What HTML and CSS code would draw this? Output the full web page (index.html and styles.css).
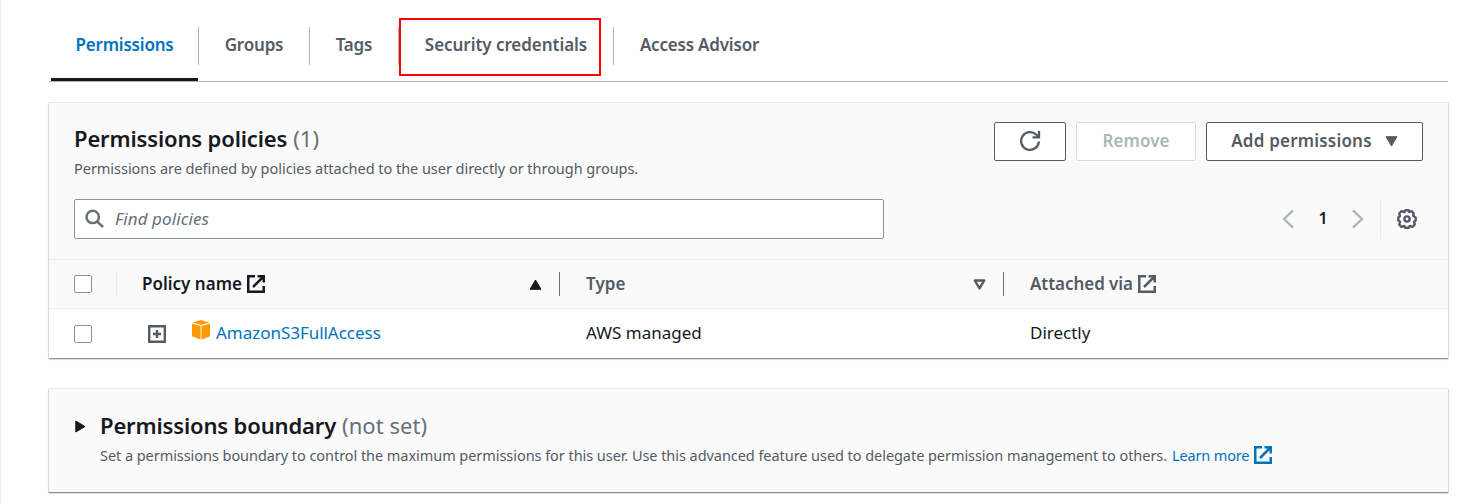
FILE: index.html
```html
<!DOCTYPE html>
<html lang="en">
<head>
<meta charset="utf-8">
<title>Permissions</title>
<link rel="stylesheet" href="styles.css">
</head>
<body>
<svg class="defs" aria-hidden="true">
  <symbol id="external" viewBox="0 0 18 18"><path d="M8 1.25H1.25v15.500h15.500V11M10.500 1.250h6.250V7.500M16.500 1.500 6 12" fill="none" stroke="currentColor" stroke-width="2.500"/></symbol>
</svg>
<main class="page">
  <nav class="tabs">
    <a class="tab tab-permissions active"><span>Permissions</span></a>
    <a class="tab tab-groups"><span>Groups</span></a>
    <a class="tab tab-tags"><span>Tags</span></a>
    <a class="tab tab-credentials"><span>Security credentials</span><i class="highlight"></i></a>
    <a class="tab tab-advisor"><span>Access Advisor</span></a>
  </nav>

  <section class="card policies">
    <header class="card-header">
      <div class="heading">
        <div>
          <h2><span class="title">Permissions policies</span><span class="count">(1)</span></h2>
          <p class="description">Permissions are defined by policies attached to the user directly or through groups.</p>
        </div>
        <div class="actions">
          <button class="button refresh" aria-label="Refresh"><svg width="22" height="22" viewBox="0 0 22 22" fill="none" stroke="currentColor" stroke-width="2.300"><path d="M19.900 11.500a8.900 8.900 0 1 1-2.500-6.700L19.500 7M20 1v6.400h-6.500"/></svg></button>
          <button class="button remove" disabled><span>Remove</span></button>
          <button class="button add"><span>Add permissions</span><svg width="13" height="11" viewBox="0 0 13 11"><path d="M1 .7h11L6.500 10z" fill="currentColor" stroke="currentColor" stroke-linejoin="round"/></svg></button>
        </div>
      </div>
      <div class="tools">
        <div class="search">
          <svg width="20" height="20" viewBox="0 0 20 20" fill="none" stroke="currentColor" stroke-width="2.500"><circle cx="7.700" cy="7.900" r="6.200"/><path d="m12 12.300 6 5.700"/></svg>
          <span>Find policies</span>
        </div>
        <div class="pagination">
          <svg width="12" height="20" viewBox="0 0 12 20" fill="none" stroke="currentColor" stroke-width="2.300"><path d="M11 1.300 2 10l9 8.700"/></svg>
          <b>1</b>
          <svg width="12" height="20" viewBox="0 0 12 20" fill="none" stroke="currentColor" stroke-width="2.300"><path d="m1 1.300 9 8.700-9 8.700"/></svg>
          <div class="settings">
            <svg width="20" height="20" viewBox="0 0 20 20" fill="none" stroke="currentColor" stroke-width="2.400" stroke-linejoin="round"><path d="m8.400 1.300h3.200l.7 1.600 2.200-.7 2.300 2.300-.7 2.200 2.600 1.700v3.200L17.100 12.700l.7 2.800-2.300 2.300-2.700-.8-1.200 1.700H8.400L7.200 17l-2.700.8-2.300-2.300.8-2.700-1.700-1.200V8.400L3 7.200l-.8-2.700 2.300-2.300 2.700.8z"/><circle cx="10" cy="10" r="2.600"/></svg>
          </div>
        </div>
      </div>
    </header>
    <div class="row row-head">
      <div class="cell check"><i class="checkbox"></i></div>
      <div class="cell name"><span class="t-policy">Policy name</span><svg class="ext" width="18" height="18"><use href="#external"/></svg><svg class="sort" width="13" height="11" viewBox="0 0 13 11"><path d="M1 10.300h11L6.500 1z" fill="currentColor" stroke="currentColor" stroke-linejoin="round"/></svg></div>
      <div class="cell type"><span class="t-type">Type</span><svg class="sort" width="13" height="11" viewBox="0 0 13 11"><path d="M1.800 1.500h9.400L6.500 9.300z" fill="none" stroke="currentColor" stroke-width="2.400" stroke-linejoin="round"/></svg></div>
      <div class="cell via"><span class="t-via">Attached via</span><svg class="ext" width="18" height="18"><use href="#external"/></svg></div>
    </div>
    <div class="row row-body">
      <div class="cell check"><i class="checkbox"></i></div>
      <div class="cell name">
        <svg class="expand" width="18" height="18" viewBox="0 0 18 18" fill="none" stroke="currentColor" stroke-width="2.400"><path d="M1.200 1.200h15.600v15.600H1.200zM9 5v8M5 9h8"/></svg>
        <svg class="cube" width="18" height="20" viewBox="0 0 18 20" fill="#ff9900"><path d="m9 0 8.300 2.400L9 5 .7 2.400zM0 3.500l8.500 2.600V19.500L0 16.200zM18 3.500 9.500 6.100v13.400l8.500-3.300z"/></svg>
        <a class="t-link">AmazonS3FullAccess</a>
      </div>
      <div class="cell type"><span class="t-aws">AWS managed</span></div>
      <div class="cell via"><span class="t-direct">Directly</span></div>
    </div>
  </section>

  <section class="card boundary">
    <svg class="caret" width="11" height="13" viewBox="0 0 11 13"><path d="M.8 1v11L10 6.500z" fill="currentColor" stroke="currentColor" stroke-linejoin="round"/></svg>
    <div>
      <h2><span class="title">Permissions boundary</span><span class="count">(not set)</span></h2>
      <p class="description"><span class="t-set">Set a permissions boundary to control the maximum permissions for this user. Use this advanced feature used to delegate permission management to others.</span><a class="learn">Learn more</a><svg class="learn-icon" width="18" height="18"><use href="#external"/></svg></p>
    </div>
  </section>
</main>
</body>
</html>
```
FILE: styles.css
```css
* { box-sizing: border-box; }
body { margin: 0; background: #fff; font-family: "Noto Sans", "Open Sans", sans-serif; font-size: 17px; color: #16191f; }
.defs { position: absolute; width: 0; height: 0; }
.page { height: 504px; padding: 0 35px 0 48px; border-left: 1px solid #f0f0f0; overflow: hidden; }
span, a, b { white-space: nowrap; }
svg { display: block; flex: none; }

.tabs { display: flex; height: 82px; padding: 27px 0 0 2px; border-bottom: 1px solid #aab7b8; }
.tab { position: relative; display: flex; justify-content: center; height: 38px; line-height: 36px; border-right: 1px solid #aab7b8; color: #545b64; font-weight: 600; letter-spacing: -.2px; }
.tab.active { color: #0073bb; }
.tab.active::after { content: ""; position: absolute; left: 0; right: 0; top: 51px; height: 3px; background: #16191f; }
.tab-permissions { width: 148px; }
.tab-groups { width: 111px; }
.tab-tags { width: 89px; }
.tab-credentials { width: 215px; letter-spacing: -.05px; }
.tab-advisor { width: 171px; border-right: 0; }
.highlight { position: absolute; left: 0; top: -9px; width: 202px; height: 58px; border: 2px solid #f00; }

.card { width: 1401px; margin-left: -1px; border: 1px solid #d5dbdb; border-top-color: #eaeded; border-bottom-color: #879596; border-radius: 2px; box-shadow: 0 1px 1px #d5dbdb; }
.policies { margin-top: 20px; height: 257px; }
.card-header { height: 156px; padding: 18px 25px 0; background: #fafafa; }
.heading { display: flex; justify-content: space-between; height: 78px; }
h2 { display: flex; gap: 6px; margin: 0; font-size: 22px; line-height: 34px; font-weight: 600; }
.title { letter-spacing: -.15px; }
.count { color: #687078; font-weight: 400; letter-spacing: .05px; }
.description { margin: 0; font-size: 14.500px; line-height: 26px; color: #545b64; letter-spacing: -.035px; }
.actions { display: flex; gap: 10px; padding-top: 1px; }
.button { display: flex; align-items: center; justify-content: center; height: 39px; padding: 0 0 1px; border: 1px solid #545b64; border-radius: 2px; background: #fff; color: #545b64; font: 600 17px "Noto Sans", sans-serif; }
.button span { margin-top: -1px; }
.refresh { width: 72px; padding: 0; }
.refresh svg { margin-top: -1px; }
.remove { width: 120px; border-color: #d5dbdb; color: #aab7b8; letter-spacing: .1px; }
.add { width: 217px; gap: 13px; letter-spacing: .2px; }
.tools { display: flex; justify-content: space-between; }
.search { display: flex; align-items: center; gap: 10px; width: 810px; height: 40px; padding: 0 10px; border: 1px solid #879596; border-radius: 2px; background: #fff; color: #687078; font-style: italic; }
.search span { margin-top: -2px; letter-spacing: .1px; }
.pagination { display: flex; align-items: center; height: 40px; color: #aab7b8; }
.pagination b { width: 58px; margin-top: -2px; text-align: center; color: #16191f; font-size: 16px; font-weight: 600; }
.settings { display: flex; align-items: center; justify-content: flex-end; width: 43px; height: 40px; margin-left: 16px; padding-right: 6px; border-left: 1px solid #eaeded; color: #545b64; }

.row { display: grid; grid-template-columns: 68px 443px 444px 1fr; }
.cell { display: flex; align-items: center; }
.cell span, .cell a { margin-top: -2px; }
.row-head { height: 50px; padding: 12px 0; border-top: 1px solid #eaeded; border-bottom: 1px solid #eaeded; background: #fafafa; color: #545b64; font-weight: 600; }
.row-body { height: 49px; background: #fff; }
.check { padding-left: 25px; }
.checkbox { width: 18px; height: 18px; border: 1px solid #879596; border-radius: 2px; background: #fff; }
.row-head .check { border-right: 1px solid #eaeded; }
.name { padding-left: 25px; }
.row-head .name { border-right: 1px solid #687078; color: #16191f; }
.row-head .type { border-right: 1px solid #687078; }
.type, .via { padding-left: 26px; }
.ext { margin-left: 5px; }
.sort { margin: 1px 17px 0 auto; }
.t-policy { letter-spacing: 0; }
.t-type { letter-spacing: .1px; }
.t-via { letter-spacing: -.05px; }
.expand { margin-left: 6px; color: #545b64; }
.cube { margin: -7px 6px 0 26px; }
.t-link { color: #0073bb; letter-spacing: -.03px; }

.boundary { display: flex; height: 105px; margin-top: 29px; padding: 19px 25px; background: #fafafa; }
.caret { margin: 12px 15px 0 1px; }
.boundary h2 { margin-left: -1px; }
.boundary .description { display: flex; align-items: center; margin-left: -1px; letter-spacing: -.055px; }
.learn { margin-left: 5px; color: #0073bb; letter-spacing: -.15px; }
.learn-icon { margin-left: 5px; color: #0073bb; }
```
